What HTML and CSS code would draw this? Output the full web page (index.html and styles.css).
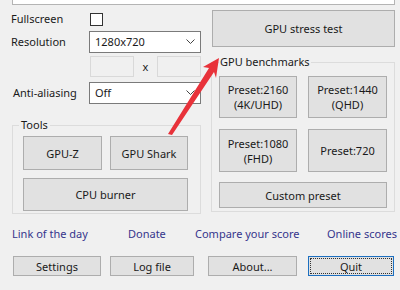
FILE: index.html
```html
<!DOCTYPE html>
<html lang="en">

<head>
    <meta charset="UTF-8">
    <title>GpuTest</title>
    <link rel="stylesheet" href="styles.css">
</head>

<body>
    <div class="top-box"></div>

    <div class="main">
        <!-- Settings column -->
        <div class="left">
            <div class="row r-full">
                <span class="label">Fullscreen</span>
                <span class="check"></span>
            </div>
            <div class="row r-res">
                <span class="label">Resolution</span>
                <div class="select">1280x720
                    <svg class="chev" width="9" height="6" viewBox="0 0 9 6"><polyline points="0.5,0.5 4.5,4.5 8.5,0.5" fill="none" stroke="#444" stroke-width="1"/></svg>
                </div>
            </div>
            <div class="row r-custom">
                <span class="field"></span>
                <span class="times">x</span>
                <span class="field"></span>
            </div>
            <div class="row r-aa">
                <span class="label label-aa">Anti-aliasing</span>
                <div class="select">Off
                    <svg class="chev" width="9" height="6" viewBox="0 0 9 6"><polyline points="0.5,0.5 4.5,4.5 8.5,0.5" fill="none" stroke="#444" stroke-width="1"/></svg>
                </div>
            </div>

            <fieldset class="group tools">
                <legend class="legend-tools">Tools</legend>
                <div class="btn-row">
                    <button class="btn btn-gpuz">GPU-Z</button>
                    <button class="btn btn-shark">GPU Shark</button>
                </div>
                <button class="btn btn-cpu">CPU burner</button>
            </fieldset>
        </div>

        <!-- Benchmarks column -->
        <div class="right">
            <button class="btn btn-stress">GPU stress test</button>
            <fieldset class="group bench">
                <legend class="legend-bench">GPU benchmarks</legend>
                <div class="bench-row">
                    <button class="btn preset preset-a">Preset:2160<br>(4K/UHD)</button>
                    <button class="btn preset preset-b">Preset:1440<br>(QHD)</button>
                </div>
                <div class="bench-row row-two">
                    <button class="btn preset preset-a preset-tall">Preset:1080<br>(FHD)</button>
                    <button class="btn preset preset-b preset-tall">Preset:720</button>
                </div>
                <button class="btn btn-custom">Custom preset</button>
            </fieldset>
        </div>
    </div>

    <div class="links">
        <a class="link link-day">Link of the day</a>
        <a class="link link-donate">Donate</a>
        <a class="link link-compare">Compare your score</a>
        <a class="link">Online scores</a>
    </div>

    <div class="bottom">
        <button class="btn small b-settings">Settings</button>
        <button class="btn small b-log">Log file</button>
        <button class="btn small b-about">About...</button>
        <button class="btn small b-quit">Quit</button>
    </div>

    <!-- red annotation arrow -->
    <svg class="arrow" width="400" height="290" viewBox="0 0 400 290">
        <polygon points="219,58 203,67 209,68 168,134 172,135 214,72 216,78" fill="#e8323a"/>
    </svg>
</body>

</html>
```

FILE: styles.css
```css
body {
    margin: 0;
    width: 400px;
    height: 290px;
    background-color: #f0f0f0;
    font-family: "Noto Sans", "Open Sans", sans-serif;
    font-size: 11px;
    line-height: 16px;
    color: #1a1a1a;
    position: relative;
    overflow: hidden;
}

.top-box {
    height: 4px;
    margin: 0 5px 0 12px;
    background: #fff;
    border: 1px solid #b4b4b4;
    border-top: none;
}

.main {
    display: flex;
    margin-top: 5px;
    padding-left: 11px;
}

.left {
    width: 190px;
    display: flex;
    flex-direction: column;
}

.right {
    width: 184px;
    margin-left: 10px;
    display: flex;
    flex-direction: column;
}

.row {
    display: flex;
    align-items: center;
}

.label {
    width: 78px;
}

.label-aa {
    padding-left: 2px;
    width: 76px;
}

.r-full {
    height: 18px;
}

.check {
    width: 11px;
    height: 11px;
    margin-left: 1px;
    border: 1px solid #333;
    background: #fff;
}

.r-res {
    height: 22px;
    margin-top: 3px;
}

.r-aa {
    height: 22px;
    margin-top: 5px;
}

.select {
    width: 100px;
    height: 20px;
    border: 1px solid #7a7a7a;
    background: #fff;
    display: flex;
    align-items: center;
    justify-content: space-between;
    padding: 0 5px 0 5px;
    box-sizing: content-box;
}

.chev {
    display: block;
}

.r-custom {
    height: 21px;
    margin-top: 3px;
    padding-left: 79px;
}

.field {
    width: 42px;
    height: 19px;
    border: 1px solid #d9d9d9;
    background: #f0f0f0;
}

.times {
    width: 23px;
    text-align: center;
}

/* group boxes */
.group {
    margin: 0;
    border: 1px solid #dcdcdc;
    min-width: 0;
}

.group legend {
    line-height: 16px;
}

.tools {
    margin: 13px 0 0 1px;
    width: 189px;
    box-sizing: border-box;
    padding: 3px 0 2px 10px;
}

.legend-tools {
    padding: 0 2px;
    margin-left: -4px;
}

.bench {
    margin-top: 7px;
    width: 184px;
    box-sizing: border-box;
    padding: 6px 0 3px 7px;
}

.legend-bench {
    padding: 0 1px;
}

/* buttons */
.btn {
    background: #e1e1e1;
    border: 1px solid #adadad;
    font-family: inherit;
    font-size: inherit;
    line-height: 15px;
    color: #1a1a1a;
    padding: 0;
    margin: 0;
    box-sizing: border-box;
}

.btn-row {
    display: flex;
}

.btn-gpuz {
    width: 79px;
    height: 34px;
}

.btn-shark {
    width: 78px;
    height: 34px;
    margin-left: 8px;
}

.btn-cpu {
    width: 165px;
    height: 33px;
    margin-top: 8px;
}

.btn-stress {
    width: 183px;
    height: 37px;
    margin-left: 1px;
}

.bench-row {
    display: flex;
}

.row-two {
    margin-top: 11px;
}

.preset {
    height: 42px;
}

.preset-tall {
    height: 43px;
}

.preset-a {
    width: 78px;
}

.preset-b {
    width: 79px;
    margin-left: 11px;
}

.btn-custom {
    width: 168px;
    height: 26px;
    margin-top: 10px;
}

/* links */
.links {
    display: flex;
    margin-top: 12px;
    padding-left: 12px;
}

.link {
    color: #35358c;
    white-space: nowrap;
}

.link-day {
    width: 116px;
}

.link-donate {
    width: 67px;
}

.link-compare {
    width: 132px;
}

/* bottom buttons */
.bottom {
    display: flex;
    margin-top: 14px;
    padding-left: 13px;
}

.small {
    height: 20px;
}

.b-settings {
    width: 88px;
}

.b-log {
    width: 84px;
    margin-left: 9px;
}

.b-about {
    width: 89px;
    margin-left: 14px;
}

.b-quit {
    width: 86px;
    margin-left: 11px;
    border-color: #1c6fc0;
    outline: 1px dotted #333;
    outline-offset: -3px;
}

.arrow {
    position: absolute;
    left: 0;
    top: 0;
    pointer-events: none;
}
```
